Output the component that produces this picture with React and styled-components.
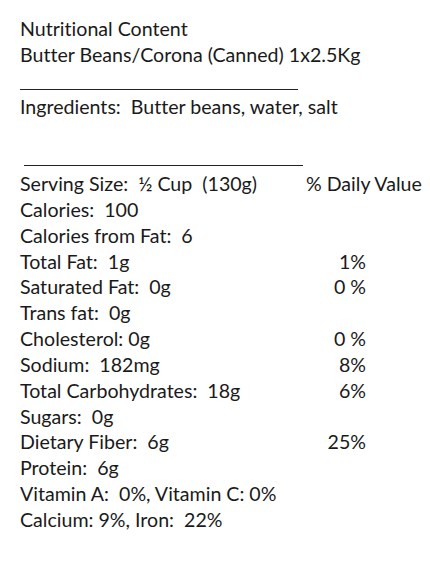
import React from 'react';
import styled, { createGlobalStyle } from 'styled-components';

const GlobalStyle = createGlobalStyle`
  body {
    margin: 0;
    background: #ffffff;
    font-family: Lato, 'Open Sans', sans-serif;
    color: #1a1a1a;
  }
`;

const Page = styled.div`
  width: 430px;
  height: 566px;
  padding: 16px 0 0 20px;
  box-sizing: border-box;
  font-size: 19.6px;
  line-height: 26px;
  font-variant-ligatures: none;
`;

const Line = styled.div`
  white-space: pre;
`;

const Rule = styled.div`
  width: ${({ width }) => width}px;
  margin: ${({ top }) => top}px 0 ${({ bottom }) => bottom}px ${({ left }) => left || 0}px;
  border-top: 1px solid #222222;
`;

const Row = styled.div`
  display: grid;
  grid-template-columns: 286px 60px;
  white-space: pre;
  height: 25.85px;
  line-height: 25.85px;
`;

const Pct = styled.span`
  text-align: ${({ header }) => (header ? 'left' : 'right')};
`;

const rows = [
  ['Serving Size:  ½ Cup  (130g)', '% Daily Value', true],
  ['Calories:  100', ''],
  ['Calories from Fat:  6', ''],
  ['Total Fat:  1g', '1%'],
  ['Saturated Fat:  0g', '0 %'],
  ['Trans fat:  0g', ''],
  ['Cholesterol: 0g', '0 %'],
  ['Sodium:  182mg', '8%'],
  ['Total Carbohydrates:  18g', '6%'],
  ['Sugars:  0g', ''],
  ['Dietary Fiber:  6g', '25%'],
  ['Protein:  6g', ''],
  ['Vitamin A:  0%, Vitamin C: 0%', ''],
  ['Calcium: 9%, Iron:  22%', '']
];

const App = () => (
  <>
    <GlobalStyle />
    <Page>
      <Line>Nutritional Content</Line>
      <Line>Butter Beans/Corona (Canned) 1x2.5Kg</Line>
      <Rule width={278} top={21} bottom={4} />
      <Line>Ingredients:  Butter beans, water, salt</Line>
      <Rule width={279} top={45} bottom={5} left={4} />
      {rows.map(([label, pct, header]) => (
        <Row key={label}>
          <span>{label}</span>
          <Pct header={header}>{pct}</Pct>
        </Row>
      ))}
    </Page>
  </>
);

export default App;
